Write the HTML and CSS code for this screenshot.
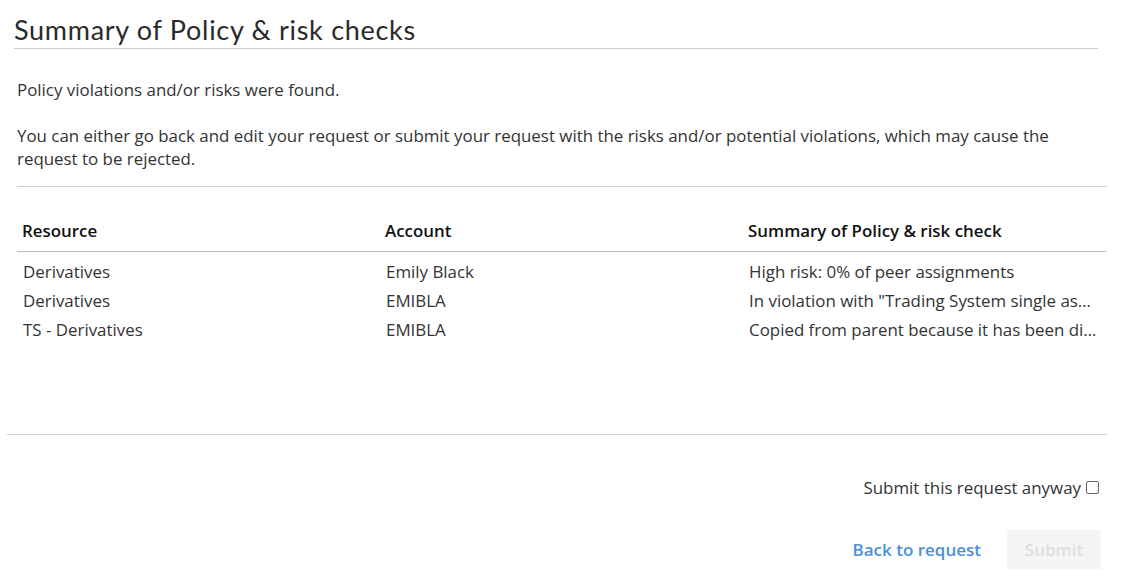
FILE: index.html
```html
<!DOCTYPE html>
<html>
<head>
<meta charset="utf-8">
<link rel="stylesheet" href="styles.css">
</head>
<body>
<div class="page">
  <h1 class="title">Summary of Policy &amp; risk checks</h1>
  <div class="content">
    <p class="msg first">Policy violations and/or risks were found.</p>
    <p class="msg">You can either go back and edit your request or submit your request with the risks and/or potential violations, which may cause the request to be rejected.</p>
    <div class="rule"></div>
    <table class="grid">
      <thead>
        <tr><th>Resource</th><th>Account</th><th>Summary of Policy &amp; risk check</th></tr>
      </thead>
      <tbody>
        <tr><td>Derivatives</td><td>Emily Black</td><td><span class="clip">High risk: 0% of peer assignments</span></td></tr>
        <tr><td>Derivatives</td><td>EMIBLA</td><td><span class="clip">In violation with "Trading System single assignment" policy</span></td></tr>
        <tr><td>TS - Derivatives</td><td>EMIBLA</td><td><span class="clip">Copied from parent because it has been discovered</span></td></tr>
      </tbody>
    </table>
  </div>
  <div class="footer">
    <label class="confirm">Submit this request anyway<span class="box"></span></label>
    <div class="actions">
      <span class="link">Back to request</span>
      <span class="btn">Submit</span>
    </div>
  </div>
</div>
</body>
</html>
```
FILE: styles.css
```css
html, body {
  margin: 0;
  padding: 0;
  background: #fff;
}
body {
  font-family: "Open Sans", "Liberation Sans", sans-serif;
  color: #333;
  font-size: 16.9px;
}
.page {
  width: 1121px;
}
.title {
  margin: 12px 0 0 14px;
  width: 1084px;
  font-family: "Lato", "Open Sans", sans-serif;
  font-weight: 400;
  font-size: 27px;
  letter-spacing: 0.7px;
  line-height: 36px;
  color: #2a2a2a;
  border-bottom: 1px solid #ccc;
  padding-bottom: 0;
}
.content {
  margin-left: 17px;
  width: 1090px;
}
.msg {
  margin: 0;
  line-height: 23px;
  padding-top: 23px;
}
.msg.first {
  padding-top: 29px;
}
.rule {
  height: 1px;
  background: #ccc;
  margin-top: 16px;
}
.grid {
  width: 1089px;
  border-collapse: collapse;
  table-layout: fixed;
  margin-top: 32px;
}
.grid th {
  text-align: left;
  font-weight: 600;
  color: #111;
  padding: 0 0 8px 5px;
  line-height: 24px;
  border-bottom: 1px solid #bbb;
}
.grid td {
  padding: 0 0 0 6px;
  line-height: 29px;
  white-space: nowrap;
  overflow: hidden;
}
.grid tbody tr:first-child td { padding-top: 5px; }
.clip {
  display: block;
  overflow: hidden;
  text-overflow: ellipsis;
  white-space: nowrap;
  padding-right: 8px;
}
.footer {
  margin: 90px 0 0 7px;
  width: 1094px;
  padding-right: 6px;
  border-top: 1px solid #ccc;
  display: flex;
  flex-direction: column;
  align-items: flex-end;
}
.confirm {
  margin-top: 42px;
  margin-right: 2px;
  display: flex;
  align-items: center;
  line-height: 22px;
}
.box {
  width: 11px;
  height: 11px;
  border: 1px solid #666;
  border-radius: 2px;
  margin-left: 5px;
  margin-bottom: 2px;
}
.actions {
  margin-top: 31px;
  display: flex;
  align-items: center;
}
.link {
  color: #4a90d9;
  font-weight: 600;
  font-size: 17px;
  margin-right: 26px;
}
.btn {
  background: #f5f5f5;
  color: #ddd;
  font-weight: 600;
  font-size: 17px;
  width: 94px;
  height: 39px;
  display: flex;
  align-items: center;
  justify-content: center;
}
```
